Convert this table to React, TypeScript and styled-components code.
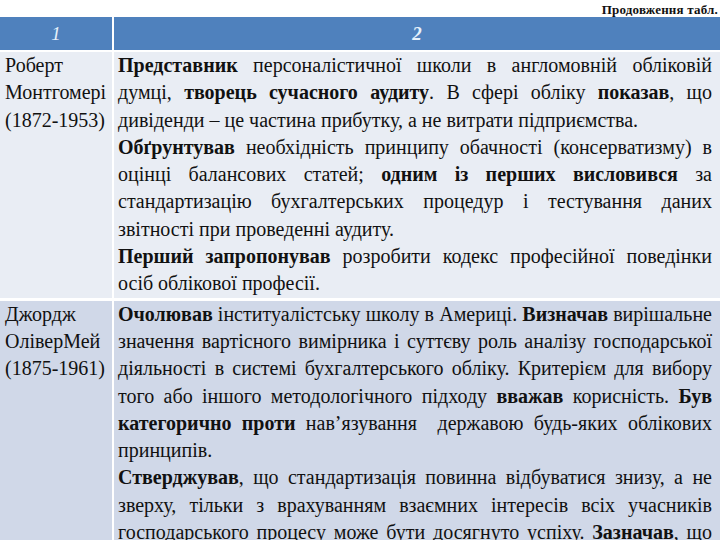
import React from 'react';
import styled, { createGlobalStyle } from 'styled-components';

const GlobalStyle = createGlobalStyle`
  html, body {
    margin: 0;
    padding: 0;
    background: #ffffff;
    overflow: hidden;
    font-family: "Liberation Serif", serif;
  }
`;

type Seg = string | { b: string };
type Cell = { name: string[]; paragraphs: Seg[][][] };

// each paragraph is a list of lines, so the breaks fall where they do in the printed table
const rows: Cell[] = [
  {
    name: ['Роберт', 'Монтгомері', '(1872-1953)'],
    paragraphs: [
      [
        [{ b: 'Представник' }, ' персоналістичної школи в англомовній обліковій'],
        ['думці, ', { b: 'творець сучасного аудиту' }, '. В сфері обліку ', { b: 'показав' }, ', що'],
        ['дивіденди – це частина прибутку, а не витрати підприємства.'],
      ],
      [
        [{ b: 'Обґрунтував' }, ' необхідність принципу обачності (консерватизму) в'],
        ['оцінці балансових статей; ', { b: 'одним із перших висловився' }, ' за'],
        ['стандартизацію бухгалтерських процедур і тестування даних'],
        ['звітності при проведенні аудиту.'],
      ],
      [
        [{ b: 'Перший запропонував' }, ' розробити кодекс професійної поведінки'],
        ['осіб облікової професії.'],
      ],
    ],
  },
  {
    name: ['Джордж', 'ОліверМей', '(1875-1961)'],
    paragraphs: [
      [
        [{ b: 'Очолював' }, ' інституалістську школу в Америці. ', { b: 'Визначав' }, ' вирішальне'],
        ['значення вартісного вимірника і суттєву роль аналізу господарської'],
        ['діяльності в системі бухгалтерського обліку. Критерієм для вибору'],
        ['того або іншого методологічного підходу ', { b: 'вважав' }, ' корисність. ', { b: 'Був' }],
        [{ b: 'категорично проти' }, ' нав’язування  державою будь-яких облікових'],
        ['принципів.'],
      ],
      [
        [{ b: 'Стверджував' }, ', що стандартизація повинна відбуватися знизу, а не'],
        ['зверху, тільки з врахуванням взаємних інтересів всіх учасників'],
        ['господарського процесу може бути досягнуто успіху. ', { b: 'Зазначав' }, ', що'],
        ['облік має відповідати потребам користувачів інформації.'],
      ],
    ],
  },
];

const App = () => {
  return (
    <Page>
      <GlobalStyle />
      <Caption>Продовження табл.</Caption>
      <Table>
        <HeadCell>1</HeadCell>
        <HeadCell $bold>2</HeadCell>
        {rows.map((row, i) => (
          <React.Fragment key={i}>
            <NameCell $tone={i % 2 === 0 ? 'light' : 'dark'}>
              {row.name.map((n) => (
                <NameLine key={n}>{n}</NameLine>
              ))}
            </NameCell>
            <TextCell $tone={i % 2 === 0 ? 'light' : 'dark'}>
              {row.paragraphs.map((para, p) => (
                <Paragraph key={p}>
                  {para.map((line, l) => (
                    <Line key={l} $last={l === para.length - 1}>
                      {line.map((seg, s) =>
                        typeof seg === 'string' ? seg : <b key={s}>{seg.b}</b>
                      )}
                    </Line>
                  ))}
                </Paragraph>
              ))}
            </TextCell>
          </React.Fragment>
        ))}
      </Table>
    </Page>
  );
};

const Page = styled.div`
  width: 720px;
  height: 540px;
  overflow: hidden;
  font-family: "Liberation Serif", serif;
  color: #111111;
`;

const Caption = styled.div`
  height: 17px;
  padding-right: 2px;
  text-align: right;
  font-size: 13px;
  font-weight: bold;
  line-height: 20px;
  letter-spacing: 0.2px;
`;

const Table = styled.div`
  display: grid;
  grid-template-columns: 112px 1fr;
  column-gap: 2px;
  background: #ffffff;
`;

const HeadCell = styled.div<{ $bold?: boolean }>`
  height: 33px;
  margin-bottom: 2px;
  display: flex;
  align-items: center;
  justify-content: center;
  background: #4f81bd;
  color: #e6f1fb;
  font-style: italic;
  font-weight: ${({ $bold }) => ($bold ? 'bold' : 'normal')};
  font-size: 19px;
`;

const toneBg = {
  light: '#e9edf4',
  dark: '#d0d8e8',
};

const NameCell = styled.div<{ $tone: 'light' | 'dark' }>`
  background: ${({ $tone }) => toneBg[$tone]};
  padding-left: 5px;
  font-size: 20px;
  line-height: 27.3px;
  margin-bottom: 3px;
`;

const NameLine = styled.div`
  white-space: nowrap;
`;

const TextCell = styled.div<{ $tone: 'light' | 'dark' }>`
  background: ${({ $tone }) => toneBg[$tone]};
  padding: 0 8px 0 4px;
  font-size: 20px;
  line-height: 27.3px;
  margin-bottom: 3px;
`;

const Paragraph = styled.div``;

const Line = styled.span<{ $last?: boolean }>`
  display: block;
  text-align: justify;
  text-align-last: ${({ $last }) => ($last ? 'left' : 'justify')};
  white-space: pre-wrap;

  b {
    font-weight: bold;
  }
`;

export default App;
